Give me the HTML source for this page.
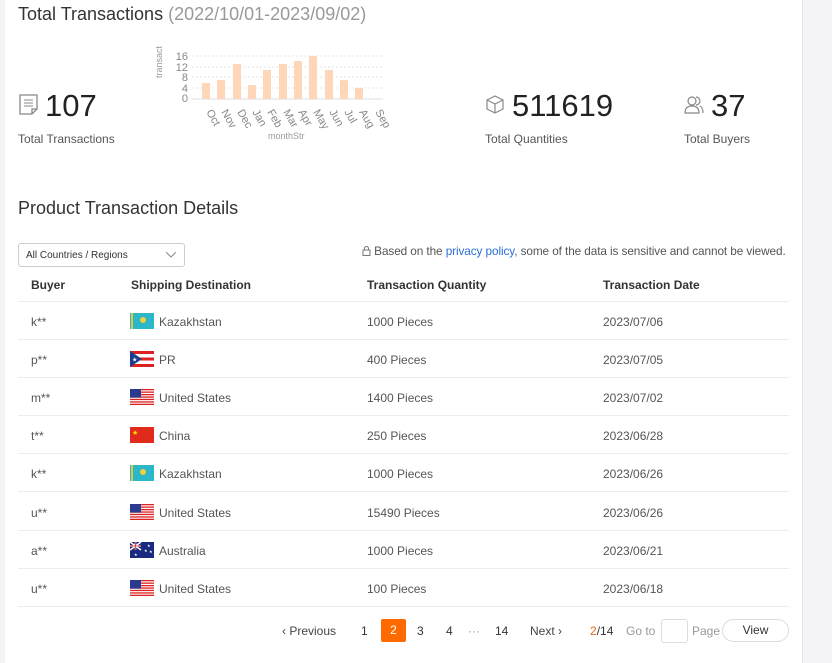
<!DOCTYPE html>
<html><head><meta charset="utf-8"><style>
*{box-sizing:border-box;margin:0;padding:0}
body{width:832px;height:663px;background:#f4f4f6;font-family:"Liberation Sans",Arial,sans-serif;position:relative;overflow:hidden}
.card{position:absolute;left:5px;top:0;width:798px;height:663px;background:#fff;border-right:1px solid #e6e6e6}
.a{position:absolute;white-space:nowrap}
.h1{font-size:18px;color:#333}
.big{font-size:31px;color:#222}
.lab{font-size:12px;color:#555}
.row{position:absolute;left:13px;width:771px;height:38px;border-bottom:1px solid #ececec;font-size:12px;color:#555}
.row span{position:absolute;top:13px}
.flag{position:absolute;left:112px;top:11px;width:24px;height:16px}
.pg{position:absolute;top:624px;font-size:12px;color:#333}
</style></head><body>
<div class="card">
<div class="a h1" style="left:13px;top:4px">Total Transactions <span style="color:#999">(2022/10/01-2023/09/02)</span></div>
<svg class="a" style="left:13px;top:93px" width="22" height="24" viewBox="0 0 22 24"><path d="M2 2h17v14l-5 5H2z M14 21v-5h5" fill="none" stroke="#888" stroke-width="1.3"/><path d="M6 7h9M6 10h9M6 13h9" stroke="#888"/></svg>
<div class="a big" style="left:40px;top:88px">107</div>
<div class="a lab" style="left:13px;top:132px">Total Transactions</div>
<svg class="a" style="left:140px;top:38px" width="250" height="104">
<text x="17" y="40" transform="rotate(-90 17 40)" font-size="9" fill="#999" font-family="Liberation Sans">transact</text>
<g font-size="11" fill="#888" font-family="Liberation Sans" text-anchor="end"><text x="43" y="22">16</text><text x="43" y="33">12</text><text x="43" y="43">8</text><text x="43" y="54">4</text><text x="43" y="64">0</text></g>
<g stroke="#e4e4e4" stroke-dasharray="2 2"><line x1="47" y1="18" x2="238" y2="18"/><line x1="47" y1="29" x2="238" y2="29"/><line x1="47" y1="39" x2="238" y2="39"/><line x1="47" y1="50" x2="238" y2="50"/></g>
<line x1="47" y1="61" x2="238" y2="61" stroke="#ddd"/>
<g fill="#ffd6b8">
<rect x="57" y="45" width="8" height="16"/><rect x="72" y="42" width="8" height="19"/><rect x="88" y="26" width="8" height="35"/><rect x="103" y="47" width="8" height="14"/><rect x="118" y="32" width="8" height="29"/><rect x="134" y="26" width="8" height="35"/><rect x="149" y="23" width="8" height="38"/><rect x="164" y="18" width="8" height="43"/><rect x="180" y="32" width="8" height="29"/><rect x="195" y="42" width="8" height="19"/><rect x="210" y="50" width="8" height="11"/></g>
<g font-size="11" fill="#888" font-family="Liberation Sans">
<text transform="translate(61,74) rotate(60)">Oct</text><text transform="translate(76,74) rotate(60)">Nov</text><text transform="translate(92,74) rotate(60)">Dec</text><text transform="translate(107,74) rotate(60)">Jan</text><text transform="translate(122,74) rotate(60)">Feb</text><text transform="translate(138,74) rotate(60)">Mar</text><text transform="translate(153,74) rotate(60)">Apr</text><text transform="translate(168,74) rotate(60)">May</text><text transform="translate(184,74) rotate(60)">Jun</text><text transform="translate(199,74) rotate(60)">Jul</text><text transform="translate(214,74) rotate(60)">Aug</text><text transform="translate(230,74) rotate(60)">Sep</text></g>
<text x="123" y="101" font-size="9" fill="#999" font-family="Liberation Sans">monthStr</text>
</svg>
<svg class="a" style="left:479px;top:94px" width="22" height="22" viewBox="0 0 22 22"><path d="M11 2l8 4v9l-8 4-8-4V6z M3 6l8 4 8-4 M11 10v9" fill="none" stroke="#888" stroke-width="1.2"/></svg>
<div class="a big" style="left:507px;top:88px">511619</div>
<div class="a lab" style="left:480px;top:132px">Total Quantities</div>
<svg class="a" style="left:678px;top:94px" width="22" height="22" viewBox="0 0 22 22"><circle cx="9" cy="7" r="4" fill="none" stroke="#888" stroke-width="1.2"/><path d="M2 19c0-5 3-7 7-7s7 2 7 7z" fill="none" stroke="#888" stroke-width="1.2"/><path d="M13 3a4 4 0 010 8M17 12c2 1 3 3 3 7" fill="none" stroke="#888" stroke-width="1.2"/></svg>
<div class="a big" style="left:706px;top:88px">37</div>
<div class="a lab" style="left:679px;top:132px">Total Buyers</div>
<div class="a h1" style="left:13px;top:198px">Product Transaction Details</div>
<div class="a" style="left:13px;top:243px;width:167px;height:24px;border:1px solid #ccc;border-radius:3px;font-size:10px;color:#333;padding:6px 7px">All Countries / Regions<svg style="position:absolute;right:8px;top:8px" width="10" height="6"><path d="M0 0l5 5 5-5" fill="none" stroke="#888"/></svg></div>
<div class="a" style="left:357px;top:244px;font-size:11.8px;color:#555;letter-spacing:-0.1px"><svg width="9" height="10" viewBox="0 0 9 10" style="vertical-align:-1px"><rect x="1" y="4" width="7" height="5.5" fill="none" stroke="#777"/><path d="M2.5 4V2.5a2 2 0 014 0V4" fill="none" stroke="#777"/></svg> Based on the <span style="color:#2a6fd6">privacy policy</span>, some of the data is sensitive and cannot be viewed.</div>
<div class="row" style="top:264px;font-weight:bold;color:#333"><span style="left:13px;top:14px">Buyer</span><span style="left:113px;top:14px">Shipping Destination</span><span style="left:349px;top:14px">Transaction Quantity</span><span style="left:585px;top:14px">Transaction Date</span></div>
<div class="row" style="top:302px"><span style="left:13px">k**</span><svg class="flag" viewBox="0 0 24 16"><rect width="24" height="16" fill="#2cb7c8"/><rect x="1" width="2" height="16" fill="#e8c53a"/><circle cx="13" cy="7" r="3" fill="#f0d040"/></svg><span style="left:141px">Kazakhstan</span><span style="left:349px">1000 Pieces</span><span style="left:585px">2023/07/06</span></div>
<div class="row" style="top:340px"><span style="left:13px">p**</span><svg class="flag" viewBox="0 0 24 16"><rect width="24" height="16" fill="#fff"/><g fill="#d22"><rect width="24" height="3"/><rect y="6.5" width="24" height="3"/><rect y="13" width="24" height="3"/></g><path d="M0 0l12 8-12 8z" fill="#1a3e8c"/><text x="2" y="10.5" font-size="6" fill="#fff">★</text></svg><span style="left:141px">PR</span><span style="left:349px">400 Pieces</span><span style="left:585px">2023/07/05</span></div>
<div class="row" style="top:378px"><span style="left:13px">m**</span><svg class="flag" viewBox="0 0 24 16"><use href="#us"/></svg><span style="left:141px">United States</span><span style="left:349px">1400 Pieces</span><span style="left:585px">2023/07/02</span></div>
<div class="row" style="top:416px"><span style="left:13px">t**</span><svg class="flag" viewBox="0 0 24 16"><rect width="24" height="16" fill="#e02a1c"/><text x="2" y="8" font-size="7" fill="#ffde00">★</text></svg><span style="left:141px">China</span><span style="left:349px">250 Pieces</span><span style="left:585px">2023/06/28</span></div>
<div class="row" style="top:454px"><span style="left:13px">k**</span><svg class="flag" viewBox="0 0 24 16"><rect width="24" height="16" fill="#2cb7c8"/><rect x="1" width="2" height="16" fill="#e8c53a"/><circle cx="13" cy="7" r="3" fill="#f0d040"/></svg><span style="left:141px">Kazakhstan</span><span style="left:349px">1000 Pieces</span><span style="left:585px">2023/06/26</span></div>
<div class="row" style="top:493px"><span style="left:13px">u**</span><svg class="flag" viewBox="0 0 24 16"><use href="#us"/></svg><span style="left:141px">United States</span><span style="left:349px">15490 Pieces</span><span style="left:585px">2023/06/26</span></div>
<div class="row" style="top:531px"><span style="left:13px">a**</span><svg class="flag" viewBox="0 0 24 16"><rect width="24" height="16" fill="#1a2a80"/><path d="M0 0l11 8M11 0L0 8M5.5 0v8M0 4h11" stroke="#fff" stroke-width="1.5"/><path d="M5.5 0v8M0 4h11" stroke="#d22" stroke-width=".8"/><g fill="#fff" font-size="4"><text x="17" y="5">★</text><text x="14" y="10">★</text><text x="19" y="11">★</text><text x="4" y="14">★</text></g></svg><span style="left:141px">Australia</span><span style="left:349px">1000 Pieces</span><span style="left:585px">2023/06/21</span></div>
<div class="row" style="top:569px"><span style="left:13px">u**</span><svg class="flag" viewBox="0 0 24 16"><use href="#us"/></svg><span style="left:141px">United States</span><span style="left:349px">100 Pieces</span><span style="left:585px">2023/06/18</span></div>
<div class="pg" style="left:277px;color:#444">‹ Previous</div>
<div class="pg" style="left:356px">1</div>
<div class="a" style="left:376px;top:619px;width:25px;height:23px;background:#ff6a00;border-radius:2px;color:#fff;font-size:12px;text-align:center;line-height:23px">2</div>
<div class="pg" style="left:412px">3</div>
<div class="pg" style="left:441px">4</div>
<div class="pg" style="left:463px;color:#999">···</div>
<div class="pg" style="left:490px">14</div>
<div class="pg" style="left:525px;color:#444">Next ›</div>
<div class="pg" style="left:585px"><span style="color:#e86a1a">2</span>/14</div>
<div class="pg" style="left:621px;color:#999">Go to</div>
<div class="a" style="left:656px;top:619px;width:27px;height:24px;border:1px solid #ddd;border-radius:3px"></div>
<div class="pg" style="left:687px;color:#999">Page</div>
<div class="a" style="left:717px;top:619px;width:67px;height:23px;border:1px solid #ddd;border-radius:12px;font-size:12px;color:#333;text-align:center;line-height:21px">View</div>
</div>
<svg width="0" height="0" style="position:absolute"><defs><g id="us"><rect width="24" height="16" fill="#fff"/><g fill="#d22"><rect width="24" height="1.3"/><rect y="2.5" width="24" height="1.3"/><rect y="5" width="24" height="1.3"/><rect y="7.4" width="24" height="1.3"/><rect y="9.8" width="24" height="1.3"/><rect y="12.3" width="24" height="1.3"/><rect y="14.7" width="24" height="1.3"/></g><rect width="11" height="8.6" fill="#2a3a8c"/></g></defs></svg>
</body></html>
